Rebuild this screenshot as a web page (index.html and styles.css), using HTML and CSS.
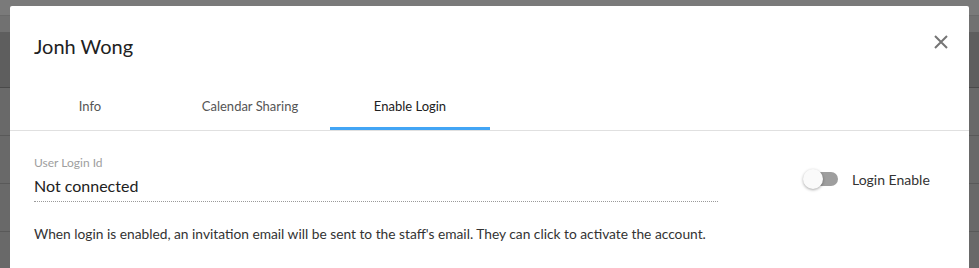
FILE: index.html
```html
<!DOCTYPE html>
<html>
<head>
<meta charset="utf-8">
<link rel="stylesheet" href="styles.css">
</head>
<body>
<div class="backdrop">
  <div class="bg-row bg-a"></div>
  <div class="bg-row bg-b"></div>
  <div class="bg-row bg-c"></div>
  <div class="bg-row bg-d"></div>
  <div class="bg-row bg-d"></div>
  <div class="bg-row bg-d"></div>
  <div class="bg-row bg-e"></div>
</div>
<div class="modal">
  <div class="modal-header">
    <h2 class="title">Jonh Wong</h2>
    <button class="close" aria-label="Close">
      <svg width="14" height="14" viewBox="0 0 14 14"><path d="M1 1L13 13M13 1L1 13" stroke="#757575" stroke-width="2" fill="none"/></svg>
    </button>
  </div>
  <div class="tabs">
    <div class="tab">Info</div>
    <div class="tab">Calendar Sharing</div>
    <div class="tab active">Enable Login</div>
  </div>
  <div class="content">
    <div class="row">
      <div class="field">
        <div class="label">User Login Id</div>
        <div class="value">Not connected</div>
      </div>
      <div class="toggle-wrap">
        <span class="toggle"><span class="track"></span><span class="knob"></span></span>
        <span class="toggle-label">Login Enable</span>
      </div>
    </div>
    <p class="note">When login is enabled, an invitation email will be sent to the staff's email. They can click to activate the account.</p>
  </div>
</div>
</body>
</html>
```
FILE: styles.css
```css
* { box-sizing: border-box; }
html, body { margin: 0; padding: 0; height: 268px; overflow: hidden; }
body { font-family: Lato, "Open Sans", sans-serif; position: relative; background: #696969; }
.backdrop { display: flex; flex-direction: column; }
.bg-row { border-bottom: 1px solid #555; }
.bg-a { height: 16px; background: #7a7a7a; border-bottom-color: #6a6a6a; }
.bg-b { height: 16px; background: #717171; border-bottom: none; }
.bg-c { height: 56px; background: #5e5e5e; border-bottom-color: #4a4a4a; }
.bg-d { height: 48px; background: #696969; border-bottom-color: #595959; }
.bg-e { height: 36px; background: #696969; border-bottom: none; }
.modal {
  position: absolute; left: 10px; top: 6px; width: 959px; bottom: 0;
  background: #fff; border-radius: 2px 2px 0 0;
}
.modal-header { display: flex; justify-content: space-between; align-items: flex-start; padding: 0 21px 0 24px; height: 76px; }
.title { margin: 0; padding-top: 28px; font-size: 20px; font-weight: 400; color: #212121; line-height: 24px; }
.close { background: none; border: 0; padding: 0; margin-top: 29px; width: 14px; height: 14px; cursor: pointer; display: block; }
.close svg { display: block; }
.tabs { display: flex; border-bottom: 1px solid #e0e0e0; }
.tab { width: 160px; height: 48px; display: flex; align-items: center; justify-content: center; font-size: 13px; color: #555; border-bottom: 3px solid transparent; padding-top: 3px; }
.tab.active { color: #212121; border-bottom-color: #42a5f5; }
.content { padding: 25px 24px 0 24px; }
.row { display: flex; align-items: flex-start; }
.field { width: 684px; border-bottom: 1px dotted #9a9a9a; }
.label { font-size: 12px; color: #9e9e9e; line-height: 14px; }
.value { font-size: 16px; color: #212121; line-height: 20px; padding: 6px 0 5px; }
.toggle-wrap { display: flex; align-items: center; margin-left: 85px; margin-top: 13px; }
.toggle { position: relative; width: 36px; height: 20px; display: block; }
.track { position: absolute; left: 5px; top: 3px; width: 30px; height: 14px; border-radius: 7px; background: #9e9e9e; }
.knob { position: absolute; left: 0; top: 0; width: 20px; height: 20px; border-radius: 50%; background: #fafafa; box-shadow: 0 1px 3px rgba(0,0,0,0.35); }
.toggle-label { margin-left: 13px; font-size: 14px; color: #333; }
.note { margin: 23px 0 0; font-size: 13.75px; color: #333; line-height: 18px; }
```
